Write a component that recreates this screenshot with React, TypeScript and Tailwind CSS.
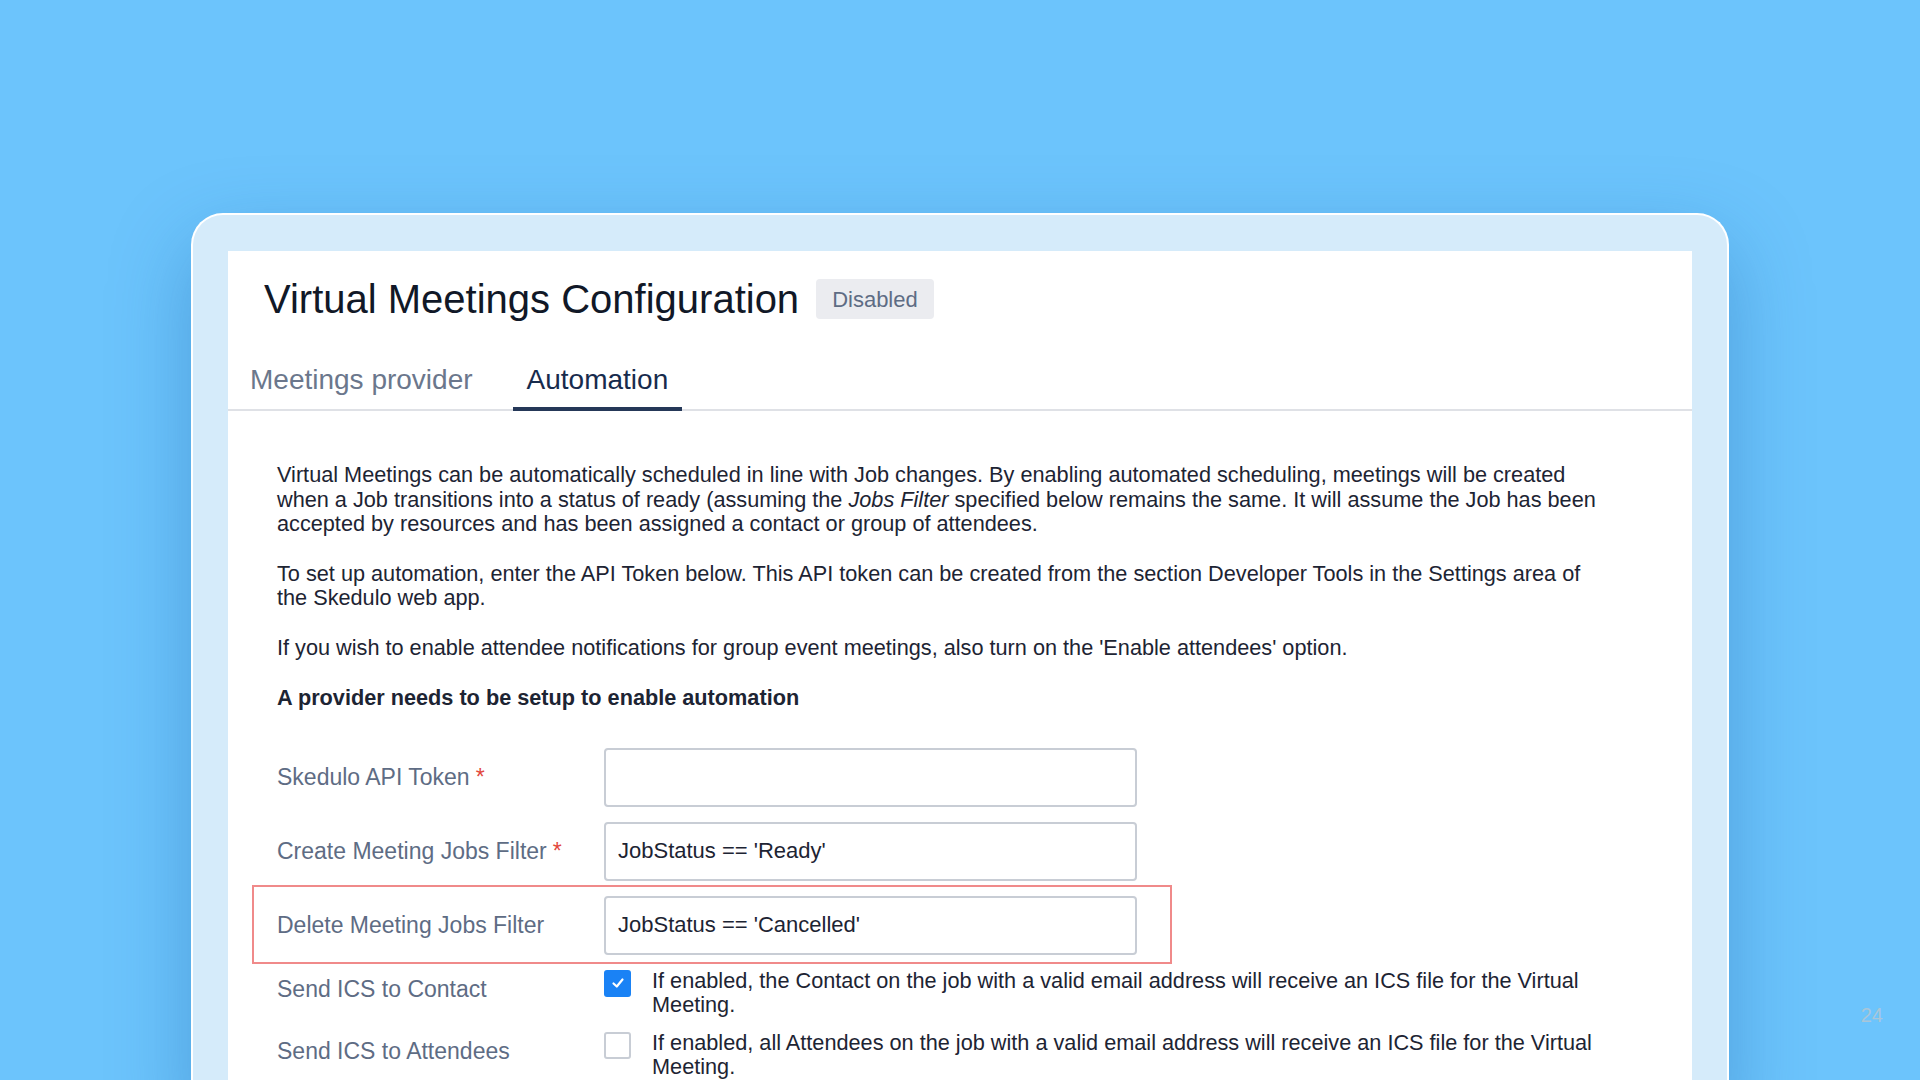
import React from "react";

const labelCls = "text-[23px] leading-[28px] text-[#5e6c84]";

function TextRow({ label, required, value }: { label: string; required?: boolean; value?: string }) {
  return (
    <div className="flex items-center">
      <div className={`w-[327px] ${labelCls}`}>
        {label}
        {required && <span className="text-[#e2483d] ml-[6px]">*</span>}
      </div>
      <input
        readOnly
        defaultValue={value ?? ""}
        className="w-[533px] h-[59px] border-2 border-[#c8cdd5] rounded-[4px] px-[12px] text-[22px] text-[#1d2433] bg-white outline-none font-['Liberation_Sans',Arial,sans-serif]"
      />
    </div>
  );
}

function CheckRow({ label, checked, children }: { label: string; checked?: boolean; children: React.ReactNode }) {
  return (
    <div className="flex items-start">
      <div className={`w-[327px] pt-[5px] ${labelCls}`}>{label}</div>
      {checked ? (
        <div className="w-[27px] h-[27px] rounded-[3px] bg-[#1a82f5] flex items-center justify-center shrink-0">
          <svg width="16" height="16" viewBox="0 0 16 16">
            <polyline points="3.5,8.5 6.8,11.5 12.5,4.5" fill="none" stroke="white" strokeWidth="2.2" strokeLinecap="round" strokeLinejoin="round" />
          </svg>
        </div>
      ) : (
        <div className="w-[27px] h-[27px] rounded-[3px] border-2 border-[#c8cdd5] bg-white shrink-0" />
      )}
      <p className="ml-[21px] -mt-[1px] text-[21.7px] leading-[24px] text-[#1d2433]">{children}</p>
    </div>
  );
}

export default function App() {
  return (
    <div className="relative w-full h-[1080px] overflow-hidden bg-[#6cc4fc] font-['Liberation_Sans',Arial,sans-serif]">
      <div className="pt-[213px] px-[191px]">
        {/* Slide frame */}
        <div className="h-[900px] rounded-t-[32px] border-2 border-b-0 border-white bg-[#d5ebfa] px-[35px] pt-[36px] shadow-[0_30px_80px_rgba(20,90,160,0.35)]">
          <div className="h-full bg-white">
            {/* Header */}
            <div className="flex items-center pl-[36px] pt-[25px]">
              <h1 className="text-[40px] leading-[46px] text-[#111827]">Virtual Meetings Configuration</h1>
              <span className="ml-[17px] h-[40px] px-[16px] flex items-center rounded-[4px] bg-[#ebecf0] text-[22px] text-[#5e6c84]">
                Disabled
              </span>
            </div>

            {/* Tabs */}
            <div className="mt-[42px] flex gap-[26px] pl-[8px] border-b-2 border-[#dfe1e6]">
              <div className="-mb-[2px] px-[14px] pb-[11px] border-b-4 border-transparent text-[28px] leading-[32px] text-[#6b778c]">
                Meetings provider
              </div>
              <div className="-mb-[2px] px-[14px] pb-[11px] border-b-4 border-[#253858] text-[28px] leading-[32px] text-[#172b4d]">
                Automation
              </div>
            </div>

            {/* Body */}
            <div className="pl-[49px] pt-[52px] text-[21.7px] leading-[24.5px] text-[#1d2433]">
              <p className="mb-[25px]">
                Virtual Meetings can be automatically scheduled in line with Job changes. By enabling automated scheduling, meetings will be created
                <br />
                when a Job transitions into a status of ready (assuming the <i>Jobs Filter</i> specified below remains the same. It will assume the Job has been
                <br />
                accepted by resources and has been assigned a contact or group of attendees.
              </p>
              <p className="mb-[25px]">
                To set up automation, enter the API Token below. This API token can be created from the section Developer Tools in the Settings area of
                <br />
                the Skedulo web app.
              </p>
              <p className="mb-[26px]">
                If you wish to enable attendee notifications for group event meetings, also turn on the 'Enable attendees' option.
              </p>
              <p className="font-bold">A provider needs to be setup to enable automation</p>

              <div className="mt-[37px] flex flex-col gap-[15px]">
                <TextRow label="Skedulo API Token" required />
                <TextRow label="Create Meeting Jobs Filter" required value="JobStatus == 'Ready'" />
                <div className="relative w-fit">
                  <TextRow label="Delete Meeting Jobs Filter" value="JobStatus == 'Cancelled'" />
                  <div className="absolute -top-[11px] -bottom-[9px] -left-[25px] -right-[35px] border-2 border-[#f08a8a] pointer-events-none" />
                </div>
                <CheckRow label="Send ICS to Contact" checked>
                  If enabled, the Contact on the job with a valid email address will receive an ICS file for the Virtual
                  <br />
                  Meeting.
                </CheckRow>
                <CheckRow label="Send ICS to Attendees">
                  If enabled, all Attendees on the job with a valid email address will receive an ICS file for the Virtual
                  <br />
                  Meeting.
                </CheckRow>
              </div>
            </div>
          </div>
        </div>
      </div>

      {/* Slide number */}
      <span className="absolute right-[37px] top-[1000px] text-[20px] text-[#a9c6d9]">24</span>
    </div>
  );
}
